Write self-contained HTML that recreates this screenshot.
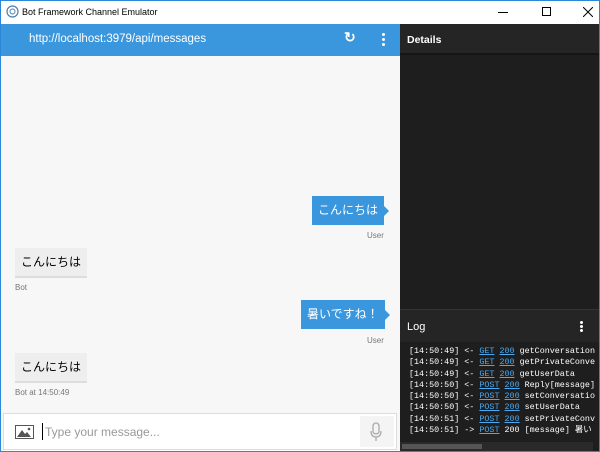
<!DOCTYPE html>
<html><head><meta charset="utf-8"><style>
*{margin:0;padding:0;box-sizing:border-box}
body{width:600px;height:452px;overflow:hidden;background:#fff;font-family:"Liberation Sans","Noto Sans CJK JP",sans-serif;position:relative}
.win{position:absolute;left:0;top:0;width:600px;height:452px;border:1px solid #2b88d8}
.title{position:absolute;left:0;top:0;width:600px;height:24px;background:#fff;font-size:9px;color:#000}
.blue{position:absolute;left:1px;top:24px;width:399px;height:32px;background:#3a96dd;color:#fff;font-size:11.5px}
.chat{position:absolute;left:1px;top:56px;width:399px;height:394px;background:#f7f7f7}
.right{position:absolute;left:400px;top:24px;width:199px;height:427px;background:#1e1e1e;color:#fff}
.ub{position:absolute;background:#3a96dd;color:#fff;font-size:12px;height:29px;line-height:29px;padding:0 6px}
.ub:after{content:"";position:absolute;right:-5px;top:10px;border-left:5px solid #3a96dd;border-top:5px solid transparent;border-bottom:5px solid transparent}
.bb{position:absolute;background:#eeeeee;border-bottom:2px solid #ddd;color:#000;font-size:12px;height:30px;line-height:29px;padding:0 6px;left:14px}
.lab{position:absolute;font-size:8px;color:#777}
.log{position:absolute;left:9px;font-family:"Liberation Mono","Noto Sans CJK JP",monospace;font-size:8.4px;color:#fff;white-space:pre;line-height:11.3px}
.log u{color:#4aa8f0}
</style></head><body>
<div class="title">
<svg style="position:absolute;left:6px;top:5px" width="13" height="13" viewBox="0 0 13 13"><circle cx="6.5" cy="6.5" r="5.5" fill="none" stroke="#4a7fb0" stroke-width="1.2"/><circle cx="6.5" cy="6.5" r="2.5" fill="none" stroke="#4a7fb0"/></svg>
<span style="position:absolute;left:22px;top:7px">Bot Framework Channel Emulator</span>
<div style="position:absolute;left:498px;top:12px;width:10px;height:1px;background:#000"></div>
<div style="position:absolute;left:542px;top:7px;width:9px;height:9px;border:1px solid #000"></div>
<svg style="position:absolute;left:583px;top:7px" width="10" height="10" viewBox="0 0 10 10"><path d="M0 0L10 10M10 0L0 10" stroke="#000" stroke-width="1"/></svg>
</div>
<div class="blue"><span style="position:absolute;left:28px;top:9px">http://localhost:3979/api/messages</span>
<span style="position:absolute;left:343px;top:5px;font-size:14px;font-weight:bold">↻</span>
<div style="position:absolute;left:381px;top:9px;width:3px;height:3px;background:#fff;border-radius:2px;box-shadow:0 5px 0 #fff,0 10px 0 #fff"></div>
</div>
<div class="chat">
<div class="ub" style="left:311px;top:140px">こんにちは</div>
<div class="lab" style="left:366px;top:175px">User</div>
<div class="bb" style="top:192px">こんにちは</div>
<div class="lab" style="left:14px;top:227px">Bot</div>
<div class="ub" style="left:300px;top:244px">暑いですね！</div>
<div class="lab" style="left:366px;top:280px">User</div>
<div class="bb" style="top:297px">こんにちは</div>
<div class="lab" style="left:14px;top:332px">Bot at 14:50:49</div>
<div style="position:absolute;left:2px;top:357px;width:394px;height:37px;background:#fff;border:1px solid #ddd">
<svg style="position:absolute;left:11px;top:11px" width="19" height="14" viewBox="0 0 19 14"><rect x="0.5" y="0.5" width="18" height="13" fill="none" stroke="#555"/><path d="M2 12 L7 5 L10 9 L12 7 L16 12Z" fill="#555"/><circle cx="14" cy="4" r="1.3" fill="#555"/></svg>
<div style="position:absolute;left:38px;top:9px;width:1px;height:17px;background:#000"></div>
<span style="position:absolute;left:41px;top:11px;font-size:12px;color:#999">Type your message...</span>
<div style="position:absolute;left:356px;top:2px;width:34px;height:31px;background:#f4f4f4"></div>
<svg style="position:absolute;left:366px;top:8px" width="12" height="20" viewBox="0 0 12 20"><rect x="3" y="1" width="6" height="11" rx="3" fill="none" stroke="#aaa" stroke-width="1.3"/><path d="M1 9 Q1 15 6 15 Q11 15 11 9 M6 15 V19" fill="none" stroke="#aaa" stroke-width="1.3"/></svg>
</div>
</div>
<div class="right">
<div style="position:absolute;left:0;top:0;width:199px;height:31px;background:#252526;border-bottom:2px solid #151515"></div>
<span style="position:absolute;left:7px;top:10px;font-size:10.5px;font-weight:bold">Details</span>
<div style="position:absolute;left:0;top:285px;width:199px;height:33px;background:#252526;border-top:1px solid #333"></div>
<span style="position:absolute;left:7px;top:297px;font-size:11px">Log</span>
<div style="position:absolute;left:180px;top:297px;width:3px;height:3px;background:#fff;border-radius:2px;box-shadow:0 4px 0 #fff,0 8px 0 #fff"></div>
<div class="log" style="top:322px">[14:50:49] &lt;- <u>GET</u> <u>200</u> getConversation
[14:50:49] &lt;- <u>GET</u> <u>200</u> getPrivateConve
[14:50:49] &lt;- <u>GET</u> <u>200</u> getUserData
[14:50:50] &lt;- <u>POST</u> <u>200</u> Reply[message]
[14:50:50] &lt;- <u>POST</u> <u>200</u> setConversatio
[14:50:50] &lt;- <u>POST</u> <u>200</u> setUserData
[14:50:51] &lt;- <u>POST</u> <u>200</u> setPrivateConv
[14:50:51] -&gt; <u>POST</u> 200 [message] 暑い</div>
<div style="position:absolute;left:0;top:418px;width:193px;height:9px;background:#2a2a2a"></div>
<div style="position:absolute;left:2px;top:420px;width:80px;height:5px;background:#555"></div>
</div>
<div class="win"></div>
</body></html>
